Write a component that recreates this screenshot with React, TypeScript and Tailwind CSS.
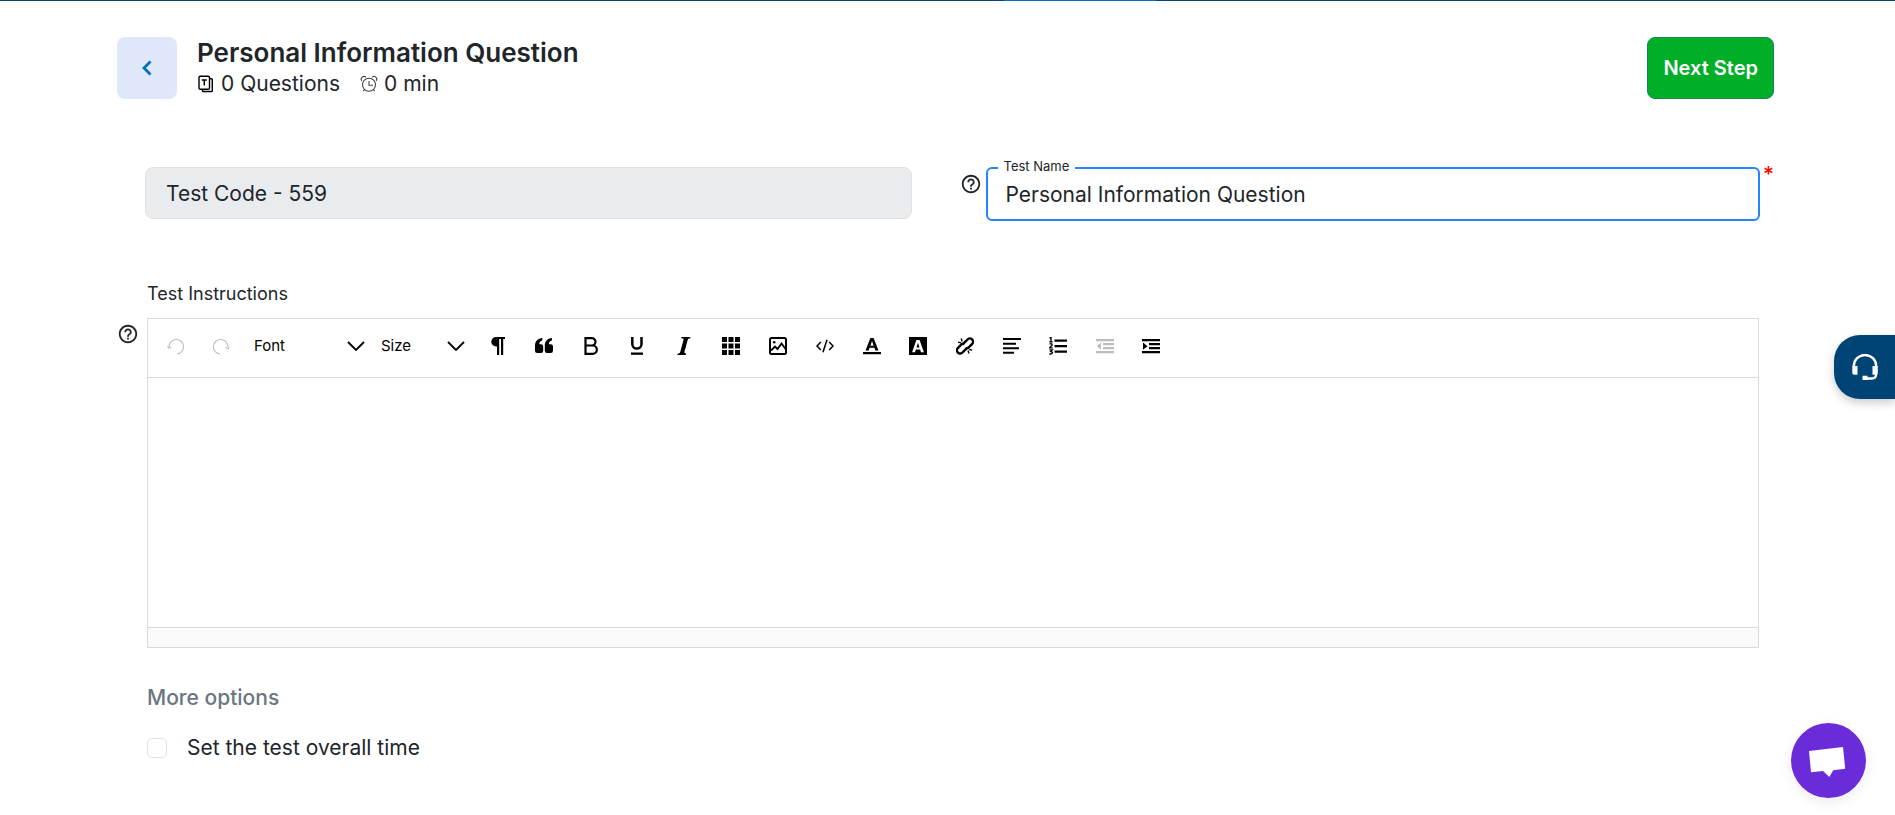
import React from 'react';

type IconProps = { className?: string; children: React.ReactNode };

const Icon: React.FC<IconProps> = ({ className = 'h-[18px] w-[18px]', children }) => (
  <svg viewBox="0 0 18 18" fill="currentColor" className={className} aria-hidden="true">
    {children}
  </svg>
);

const HelpIcon: React.FC = () => (
  <svg viewBox="0 0 24 24" fill="currentColor" className="h-[22px] w-[22px]" aria-hidden="true">
    <path d="M11 18h2v-2h-2v2zm1-16C6.48 2 2 6.48 2 12s4.48 10 10 10 10-4.48 10-10S17.52 2 12 2zm0 18c-4.41 0-8-3.59-8-8s3.59-8 8-8 8 3.59 8 8-3.59 8-8 8zm0-14c-2.21 0-4 1.79-4 4h2c0-1.1.9-2 2-2s2 .9 2 2c0 2-3 1.75-3 5h2c0-2.25 3-2.5 3-5 0-2.21-1.79-4-4-4z" />
  </svg>
);

const icons = {
  undo: (
    <Icon>
      <path d="M2 10a7.3 7.3 0 1 1 8 7M.4 9.2 2 11.2l2.6-.8" fill="none" stroke="currentColor" strokeWidth="1.1" />
    </Icon>
  ),
  redo: (
    <Icon>
      <path d="M16 10a7.3 7.3 0 1 0-8 7M17.6 10.8 15.6 11.6 13.6 10" fill="none" stroke="currentColor" strokeWidth="1.1" />
    </Icon>
  ),
  paragraph: (
    <Icon>
      <path d="M7 0h9v2h-1.800v16h-2.200V2h-1.800v16H8V9.500H7A4.700 4.700 0 0 1 7 0z" />
    </Icon>
  ),
  quote: (
    <Icon>
      <path d="M7.300 1v2.600C5.300 4 4.300 5.300 4.300 7.200H6A2.200 2.200 0 0 1 8.200 9.400v4.400A2.200 2.200 0 0 1 6 16H2.200A2.200 2.200 0 0 1 0 13.800V9C0 4.300 2.600 1.500 7.300 1zM16.900 1v2.600c-2 .4-3 1.700-3 3.600h1.900A2.200 2.200 0 0 1 18 9.400v4.400a2.200 2.200 0 0 1-2.200 2.200H12a2.200 2.200 0 0 1-2.200-2.200V9c0-4.700 2.400-7.500 7.100-8z" />
    </Icon>
  ),
  bold: (
    <Icon>
      <path d="M3.500 1.100h6.300a3.700 3.700 0 0 1 0 7.400H3.500zM3.500 8.500h7.200a4.100 4.100 0 0 1 0 8.300H3.500zV17" fill="none" stroke="currentColor" strokeWidth="2.200" />
    </Icon>
  ),
  underline: (
    <Icon>
      <path d="M4.300 0v7a4.600 4.600 0 0 0 9.200 0V0" fill="none" stroke="currentColor" strokeWidth="2.500" />
      <path d="M3 15.500h12v2.300H3z" />
    </Icon>
  ),
  italic: (
    <Icon>
      <path d="M6.500 0h9l-.3 1.200c-1.500.2-2.200.6-2.500 1.700L9.500 14.600c-.3 1.300 0 1.800 1.700 2.100l-.3 1.300H2.300l.3-1.300c1.800-.2 2.300-.7 2.700-2L8.500 3.100c.4-1.300.1-1.700-2.300-1.900z" />
    </Icon>
  ),
  table: (
    <Icon>
      <path d="M0 0h5v5H0zM6.500 0h5v5h-5zM13 0h5v5h-5zM0 6.500h5v5H0zM6.500 6.500h5v5h-5zM13 6.500h5v5h-5zM0 13h5v5H0zM6.500 13h5v5h-5zM13 13h5v5h-5z" />
    </Icon>
  ),
  image: (
    <Icon>
      <rect x="1" y="1" width="16" height="16" rx="1.500" fill="none" stroke="currentColor" strokeWidth="2" />
      <path d="m2 13.500 4-4 2.500 2.500 4-5.500 4.500 6" fill="none" stroke="currentColor" strokeWidth="1.800" />
      <circle cx="5.200" cy="5.200" r="1.300" />
    </Icon>
  ),
  code: (
    <Icon>
      <path d="M4.800 5 1 9l3.800 4M13.200 5 17 9l-3.800 4M11 2.800 7 15.200" fill="none" stroke="currentColor" strokeWidth="1.500" />
    </Icon>
  ),
  fontColor: (
    <Icon>
      <path d="M7.400 1h3.200l4.900 12.500h-3.100l-1-2.700H6.600l-1 2.700H2.500zM9 3.900 7.400 8.700h3.200zM0 15h18v2.200H0z" fillRule="evenodd" />
    </Icon>
  ),
  background: (
    <Icon>
      <path d="M0 0h18v18H0zM7.400 3 3.100 15.200h2.900l.9-2.700h4.200l.9 2.700h2.900L10.600 3zM9 5.700l1.500 4.800h-3z" fillRule="evenodd" />
    </Icon>
  ),
  unlink: (
    <Icon>
      <g fill="none" stroke="currentColor" strokeWidth="2.400">
        <path d="m7.600 6.400 3.900-3.900a3.200 3.200 0 0 1 4.700 4.400l-3.400 3.500c-.9.900-2.300 1-3.300.3" />
        <path d="m10.400 11.600-3.900 3.900a3.200 3.200 0 0 1-4.700-4.400l3.400-3.500c.9-.9 2.300-1 3.300-.3" />
      </g>
      <path d="m5.200 1.500 1 3M2 5.200l3 .6M12 13.500l1 3M13.200 12.500l3 .6" stroke="currentColor" strokeWidth="1.300" />
    </Icon>
  ),
  align: (
    <Icon>
      <path d="M0 1h18v2.100H0zM0 5.700h13v2.100H0zM0 10.200h16v2.100H0zM0 14.700h11v2.100H0z" />
    </Icon>
  ),
  numbered: (
    <Icon>
      <path d="M5.500 2.500H18v2.200H5.500zM5.500 8H18v2.200H5.500zM5.500 13.500H18v2.200H5.500z" />
      <path d="M.5 1.200 2 .5v4.300M.3 4.800h3.400M.5 7.200c1.500-1 3-.4 2.600 1L.6 10.800h3.100M.4 12.800h2.900l-1.500 1.700c2.600.1 2 3.200-1.500 2.300" fill="none" stroke="currentColor" strokeWidth="1.300" />
    </Icon>
  ),
  outdent: (
    <Icon>
      <path d="M0 2h18v2.300H0zM7 6h11v2.300H7zM7 10h11v2.300H7zM0 14h18v2.300H0zM5 5.500v7.300L.8 9.200z" />
    </Icon>
  ),
  indent: (
    <Icon>
      <path d="M0 2h18v2.300H0zM7 6h11v2.300H7zM7 10h11v2.300H7zM0 14h18v2.300H0zM1 5.500v7.300L5.500 9.200z" />
    </Icon>
  ),
};

const toolGroups = [
  [{ label: 'Formats', icon: icons.paragraph }, { label: 'Blockquote', icon: icons.quote }],
  [{ label: 'Bold', icon: icons.bold }, { label: 'Underline', icon: icons.underline }],
  [{ label: 'Italic', icon: icons.italic }],
  [{ label: 'Insert table', icon: icons.table }],
  [{ label: 'Insert image', icon: icons.image }],
  [{ label: 'Source code', icon: icons.code }],
  [{ label: 'Font color', icon: icons.fontColor }, { label: 'Background color', icon: icons.background }],
  [{ label: 'Remove link', icon: icons.unlink }],
  [{ label: 'Alignment', icon: icons.align }, { label: 'Ordered list', icon: icons.numbered }],
  [{ label: 'Decrease indent', icon: icons.outdent, disabled: true }, { label: 'Increase indent', icon: icons.indent }],
];

type ToolSelectProps = { label: string; className: string };

const ToolSelect: React.FC<ToolSelectProps> = ({ label, className }) => (
  <div className={`grid items-center ${className}`}>
    <select
      aria-label={label}
      className="col-start-1 row-start-1 w-full appearance-none bg-transparent text-[15px] leading-6 text-black outline-none"
    >
      <option>{label}</option>
    </select>
    <svg viewBox="0 0 18 10" className="pointer-events-none col-start-1 row-start-1 h-[10px] w-[18px] justify-self-end" aria-hidden="true">
      <path d="m1 1 8 8 8-8" fill="none" stroke="black" strokeWidth="1.800" />
    </svg>
  </div>
);

const Header: React.FC = () => (
  <header className="flex items-center justify-between">
    <div className="flex items-center gap-5">
      <button aria-label="Back" className="flex h-[62px] w-[60px] items-center justify-center rounded-lg bg-[#dfe7fb] text-[#0071b3]">
        <svg viewBox="0 0 10 16" className="h-4 w-[10px]" aria-hidden="true">
          <path d="M8.500 1.500 2 8l6.500 6.500" fill="none" stroke="currentColor" strokeWidth="2.800" />
        </svg>
      </button>
      <div>
        <h1 className="text-[26px] leading-8 font-semibold">Personal Information Question</h1>
        <div className="flex gap-5 text-[21px] leading-[30px]">
          <span className="flex items-center gap-[6px]">
            <svg viewBox="0 0 18 18" className="h-[18px] w-[18px]" fill="none" stroke="black" aria-hidden="true">
              <path d="M13 3.700h1.500a.8.800 0 0 1 .8.800v11.200a.8.800 0 0 1-.8.800H6.300a.8.800 0 0 1-.8-.8V14.500" strokeWidth="1.400" />
              <rect x="2" y="1.200" width="10.500" height="13" rx="1.300" strokeWidth="1.400" />
              <path d="M4.800 5h5M7.300 5v5.500" strokeWidth="1.500" />
            </svg>
            0 Questions
          </span>
          <span className="flex items-center gap-[6px]">
            <svg viewBox="0 0 18 18" className="h-[18px] w-[18px]" fill="none" stroke="#444" strokeWidth="1.100" aria-hidden="true">
              <circle cx="9" cy="9.800" r="6.500" />
              <path d="M9 6v4.200h4M5.900 2.300A2.500 2.500 0 0 0 1.900 5.800M12.100 2.300a2.500 2.500 0 0 1 4 3.500M4.500 14.500l-1.200 1.700M13.500 14.500l1.200 1.700" />
            </svg>
            0 min
          </span>
        </div>
      </div>
    </div>
    <button className="h-[62px] rounded-lg border border-[#198754] bg-[#00ae28] px-[15px] text-xl font-semibold text-white">Next Step</button>
  </header>
);

const Toolbar: React.FC = () => (
  <div role="toolbar" aria-label="Formatting" className="flex h-[59px] items-center border-b border-[#dadada] pb-1 pl-[5px] text-black">
    <button disabled aria-label="Undo" className="flex h-10 w-[45px] items-center justify-center text-[#bdbdbd]">{icons.undo}</button>
    <button disabled aria-label="Redo" className="flex h-10 w-[45px] items-center justify-center text-[#bdbdbd]">{icons.redo}</button>
    <ToolSelect label="Font" className="ml-[11px] w-[111px]" />
    <ToolSelect label="Size" className="ml-4 w-[84px]" />
    <div className="ml-[10px] flex gap-px">
      {toolGroups.map((group) => (
        <div key={group[0].label} className="flex">
          {group.map((tool) => (
            <button
              key={tool.label}
              aria-label={tool.label}
              disabled={'disabled' in tool}
              className="flex h-10 w-[46px] items-center justify-center disabled:text-[#bdbdbd]"
            >
              {tool.icon}
            </button>
          ))}
        </div>
      ))}
    </div>
  </div>
);

const App: React.FC = () => {
  const [name, setName] = React.useState('Personal Information Question');
  const [timed, setTimed] = React.useState(false);

  return (
    <div className="min-h-screen bg-white font-[Inter,sans-serif] text-[#212529]">
      {/* Loading bar */}
      <div className="flex h-px bg-[#004475]">
        <div className="ml-[53%] w-[8%] bg-[#0071b3]" />
      </div>

      <main className="pt-9 pr-[121px] pl-[117px]">
        <Header />

        <form onSubmit={(e) => e.preventDefault()}>
          <div className="mt-[68px] grid grid-cols-2 items-start">
            <div className="pr-[34px] pl-7">
              <input
                aria-label="Test code"
                readOnly
                value="Test Code - 559"
                className="h-[52px] w-full rounded-lg border border-[#dee2e6] bg-[#e9ecef] px-5 text-[21px] outline-none"
              />
            </div>
            <div className="flex items-start pl-[14px]">
              <div className="mt-[6px] mr-1">
                <HelpIcon />
              </div>
              <fieldset className="relative h-[54px] min-w-0 flex-1 rounded-md border-2 border-[#2684ff]">
                <label htmlFor="test-name" className="absolute -top-[13px] left-[10px] bg-white px-[6px] text-[13px] leading-5">
                  Test Name
                </label>
                <input
                  id="test-name"
                  value={name}
                  onChange={(e) => setName(e.target.value)}
                  className="h-full w-full bg-transparent px-[18px] text-[21px] outline-none"
                />
              </fieldset>
              <span className="w-[14px] text-right text-[21px] leading-4 font-medium text-[#ff0000]">*</span>
            </div>
          </div>

          <div className="mt-[60px] pl-[30px] text-lg leading-[26px]">Test Instructions</div>
          <div className="mt-[11px] mr-[15px] flex items-start gap-2">
            <div className="mt-[5px]">
              <HelpIcon />
            </div>
            <section className="flex-1 border border-[#dadada]">
              <Toolbar />
              <textarea aria-label="Test instructions" className="block h-[249px] w-full resize-none p-4 outline-none" />
              <div className="h-5 border-t border-[#dadada] bg-[#fafafa]" />
            </section>
          </div>

          <div className="pt-[35px] pl-[30px]">
            <h2 className="text-[21px] leading-[30px] font-medium text-[#6c757d]">More options</h2>
            <label className="mt-5 flex items-center gap-5 text-[21px] leading-[30px]">
              <input
                type="checkbox"
                checked={timed}
                onChange={(e) => setTimed(e.target.checked)}
                className="h-5 w-5 appearance-none rounded-[5px] border border-[#dee2e6] checked:bg-[#2684ff]"
              />
              Set the test overall time
            </label>
          </div>
        </form>
      </main>

      <button
        aria-label="Support"
        className="fixed top-[335px] right-0 flex h-16 w-[61px] items-center rounded-l-[26px] bg-[#004475] pl-[18px] text-white shadow-[0_4px_10px_rgba(0,0,0,0.2)]"
      >
        <svg viewBox="0 0 26 26" className="h-[26px] w-[26px]" aria-hidden="true">
          <path d="M1.800 13V12a11.200 11 0 0 1 22.400 0v8c0 3-1.700 4.500-4.400 4.500H15" fill="none" stroke="currentColor" strokeWidth="2.400" />
          <path d="M.3 12h5.200v8.800H2.300a2 2 0 0 1-2-2zM20.500 12h5.200v6.800a2 2 0 0 1-2 2h-3.200zM10.500 21.800h5V26h-5z" fill="currentColor" />
        </svg>
      </button>

      <button
        aria-label="Open chat"
        className="fixed right-[29px] bottom-[17px] flex h-[75px] w-[75px] items-center justify-center rounded-full bg-[#6a2cd8] text-white shadow-[0_4px_14px_rgba(0,0,0,0.08)]"
      >
        <svg viewBox="0 0 75 75" className="h-[75px] w-[75px]" fill="currentColor" aria-hidden="true">
          <path d="m18 28 34-4 2.200 21.800-12 1.400L38.300 54 32 48l-12 1.300z" />
        </svg>
      </button>
    </div>
  );
};

export default App;
